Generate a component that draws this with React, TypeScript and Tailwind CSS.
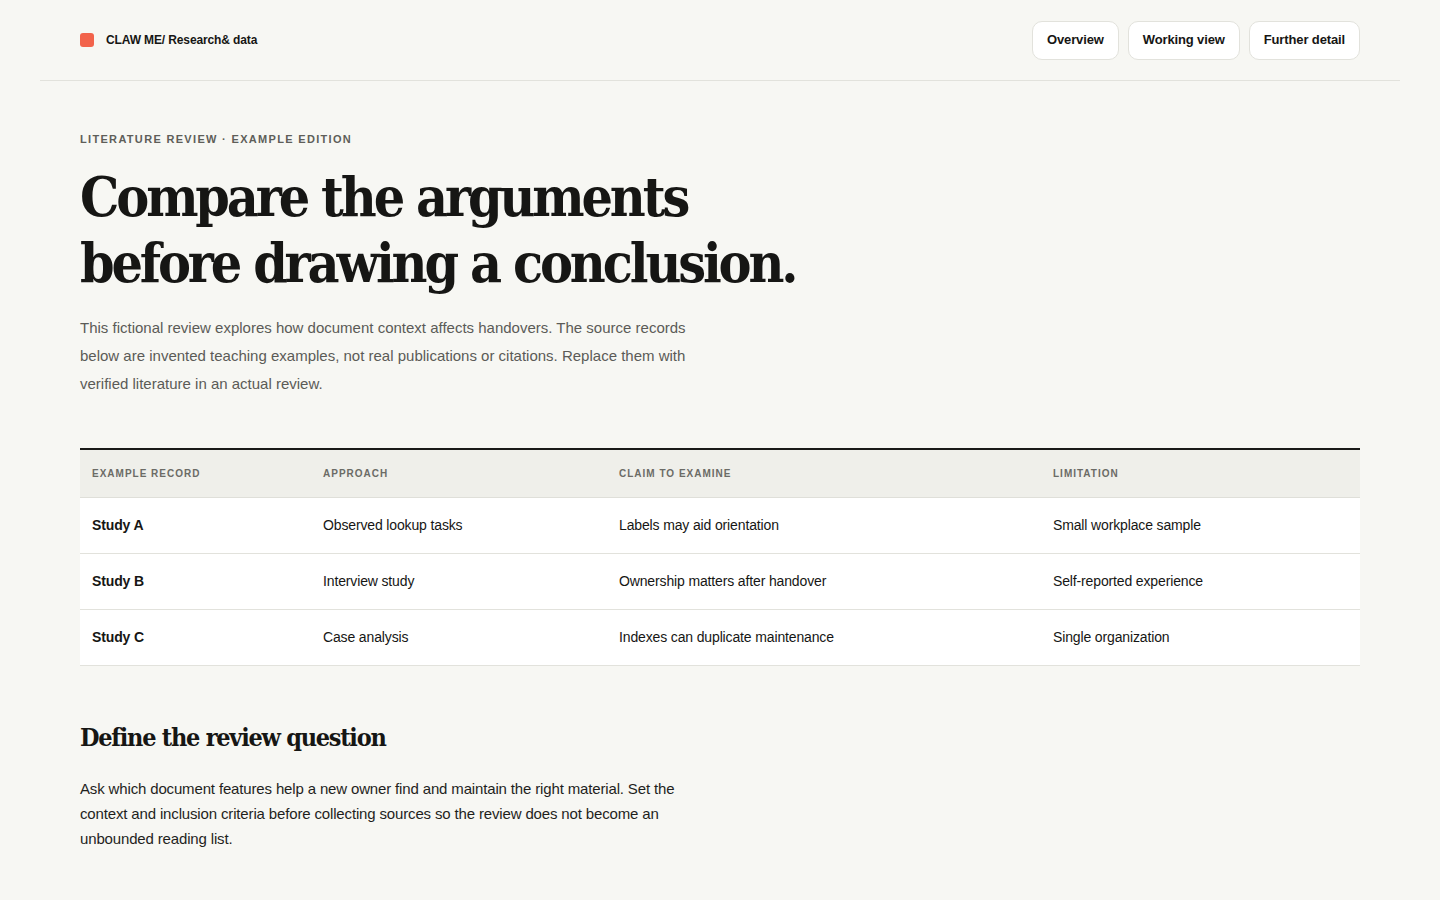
const rows = [
  ["Study A", "Observed lookup tasks", "Labels may aid orientation", "Small workplace sample"],
  ["Study B", "Interview study", "Ownership matters after handover", "Self-reported experience"],
  ["Study C", "Case analysis", "Indexes can duplicate maintenance", "Single organization"],
];

export default function App() {
  return (
    <div className="min-h-screen bg-[#f7f7f3] text-[#161614] font-['Liberation_Sans',Arial,sans-serif]">
      <div className="mx-10">
        {/* header */}
        <header className="flex h-[81px] items-center justify-between border-b border-[#e2e2dc] px-10">
          <div className="flex items-center gap-3">
            <span className="h-3.5 w-3.5 rounded-[3px] bg-[#f2634b]" />
            <span className="text-[12px] font-bold tracking-[-0.01em]">CLAW ME/ Research&amp; data</span>
          </div>
          <nav className="flex gap-[9px]">
            {["Overview", "Working view", "Further detail"].map((l) => (
              <button
                key={l}
                className="h-[39px] rounded-[10px] border border-[#e2e2dc] bg-white px-[14px] text-[13px] font-bold tracking-[-0.01em]"
              >
                {l}
              </button>
            ))}
          </nav>
        </header>

        <main className="px-10 pt-[50px] pb-12">
          <p className="text-[11px] font-bold uppercase tracking-[0.12em] text-[#5e5e59]">
            Literature review · Example edition
          </p>
          <h1 className="mt-[16px] font-['DejaVu_Serif',serif] text-[55px] font-bold leading-[66px] tracking-[-0.057em] [font-stretch:condensed]">
            Compare the arguments
            <br />
            before drawing a conclusion.
          </h1>
          <p className="mt-[18px] max-w-[640px] text-[15px] leading-[28px] text-[#5b5b57]">
            This fictional review explores how document context affects handovers. The source records below are invented
            teaching examples, not real publications or citations. Replace them with verified literature in an actual
            review.
          </p>

          <table className="mt-[50px] w-full border-collapse border-t-2 border-[#1a1a18] text-left">
            <thead>
              <tr className="h-[49px] bg-[#efefea] text-[10px] font-bold uppercase tracking-[0.1em] text-[#6b6b66]">
                <th className="w-[231px] border-b border-[#dfdfd9] px-3 font-bold">Example record</th>
                <th className="w-[296px] border-b border-[#dfdfd9] px-3 font-bold">Approach</th>
                <th className="w-[434px] border-b border-[#dfdfd9] px-3 font-bold">Claim to examine</th>
                <th className="border-b border-[#dfdfd9] px-3 font-bold">Limitation</th>
              </tr>
            </thead>
            <tbody className="text-[14px] tracking-[-0.01em]">
              {rows.map((r) => (
                <tr key={r[0]} className="h-[56px] bg-white">
                  <td className="border-b border-[#e2e2dc] px-3 font-bold">{r[0]}</td>
                  <td className="border-b border-[#e2e2dc] px-3">{r[1]}</td>
                  <td className="border-b border-[#e2e2dc] px-3">{r[2]}</td>
                  <td className="border-b border-[#e2e2dc] px-3">{r[3]}</td>
                </tr>
              ))}
            </tbody>
          </table>

          <h2 className="mt-[53px] font-['DejaVu_Serif',serif] text-[25px] font-bold tracking-[-0.05em] [font-stretch:condensed]">
            Define the review question
          </h2>
          <p className="mt-[19px] max-w-[600px] text-[15px] leading-[25px] tracking-[-0.01em] text-[#1f1f1d]">
            Ask which document features help a new owner find and maintain the right material. Set the context and
            inclusion criteria before collecting sources so the review does not become an unbounded reading list.
          </p>
        </main>
      </div>
    </div>
  );
}
